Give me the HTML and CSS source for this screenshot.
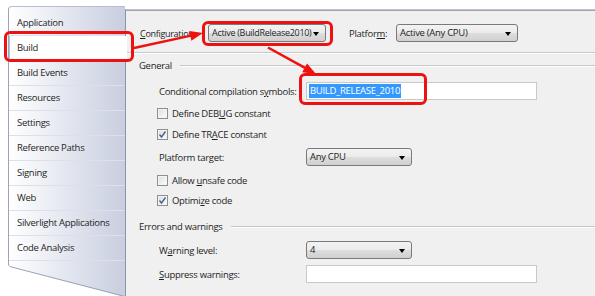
FILE: index.html
```html
<!DOCTYPE html>
<html lang="en">
<head>
    <meta charset="utf-8">
    <title>Project properties - Build</title>
    <link rel="stylesheet" href="styles.css">
</head>

<body>
    <div class="window">
        <nav class="sidebar">
            <div class="tabs">
                <div class="tab">Application</div>
                <div class="tab valgt">Build</div>
                <div class="tab">Build Events</div>
                <div class="tab">Resources</div>
                <div class="tab">Settings</div>
                <div class="tab">Reference Paths</div>
                <div class="tab">Signing</div>
                <div class="tab">Web</div>
                <div class="tab">Silverlight Applications</div>
                <div class="tab">Code Analysis</div>
            </div>
            <svg class="tabs-foot" width="117" height="34" viewBox="0 0 117 34">
                <defs>
                    <linearGradient id="foot" x1="0" x2="1" y1="0" y2="0">
                        <stop offset="0" stop-color="#ffffff"/>
                        <stop offset="1" stop-color="#c8cee0"/>
                    </linearGradient>
                </defs>
                <polygon points="0,0 117,0 117,34 2,4 0,2" fill="url(#foot)"/>
                <polyline points="0.5,0 0.5,2 2,3.6 117,33.5" fill="none" stroke="#9ba3b5" stroke-width="1"/>
            </svg>
        </nav>

        <main class="page">
            <div class="configbar">
                <span class="cfg-label"><u>C</u>onfiguration:</span>
                <div class="combo combo-config">Active (BuildRelease2010)</div>
                <span class="plat-label">Platfor<u>m</u>:</span>
                <div class="combo combo-platform">Active (Any CPU)</div>
            </div>

            <div class="group-head">General</div>

            <div class="row r-compile">
                <span class="label">Conditional compilation s<u>y</u>mbols:</span>
                <div class="textbox wide"><span class="selected">BUILD_RELEASE_2010</span></div>
            </div>
            <div class="row check r-debug">
                <span class="box"></span>
                <span>Define DEB<u>U</u>G constant</span>
            </div>
            <div class="row check r-trace">
                <span class="box"><svg width="9" height="9" viewBox="0 0 9 9"><polyline points="1.5,4.5 3.5,7 7.5,1.5" fill="none" stroke="#4a5f97" stroke-width="1.4"/></svg></span>
                <span>Define TR<u>A</u>CE constant</span>
            </div>
            <div class="row r-platform">
                <span class="label">Platform target:</span>
                <div class="combo combo-small">Any CPU</div>
            </div>
            <div class="row check r-allow">
                <span class="box"></span>
                <span>Allow <u>u</u>nsafe code</span>
            </div>
            <div class="row check r-optimize">
                <span class="box"><svg width="9" height="9" viewBox="0 0 9 9"><polyline points="1.5,4.5 3.5,7 7.5,1.5" fill="none" stroke="#4a5f97" stroke-width="1.4"/></svg></span>
                <span>Optimi<u>z</u>e code</span>
            </div>

            <div class="group-head h-errors">Errors and warnings</div>

            <div class="row r-warning">
                <span class="label">W<u>a</u>rning level:</span>
                <div class="combo combo-small">4</div>
            </div>
            <div class="row r-suppress">
                <span class="label"><u>S</u>uppress warnings:</span>
                <div class="textbox wide"></div>
            </div>
        </main>
    </div>

    <!-- red annotations drawn on top of the screenshot -->
    <div class="callout c-build"></div>
    <div class="callout c-config"></div>
    <div class="callout c-compile"></div>
    <svg class="arrows" width="595" height="296" viewBox="0 0 595 296">
        <line x1="134" y1="48" x2="191" y2="35.6" stroke="#ee1111" stroke-width="2.5"/>
        <polygon points="203,33 191.4,40.7 189.2,30.9" fill="#ee1111"/>
        <line x1="268" y1="47.5" x2="305" y2="67.8" stroke="#ee1111" stroke-width="2.5"/>
        <polygon points="316,74 302.2,72.2 307,63.4" fill="#ee1111"/>
    </svg>
</body>
</html>
```

FILE: styles.css
```css
* {
    box-sizing: border-box;
}

body {
    margin: 0;
    width: 595px;
    height: 296px;
    overflow: hidden;
    position: relative;
    background-color: #ffffff;
    font-family: "Open Sans", "Noto Sans", sans-serif;
    font-size: 9.5px;
    letter-spacing: -0.3px;
    color: #1e1e1e;
}

u {
    text-decoration-thickness: 1px;
    text-underline-offset: 1px;
}

.window {
    display: flex;
    height: 296px;
    padding-left: 8px;
}

/* left tab list */
.sidebar {
    width: 117px;
    flex: none;
    margin-top: 6px;
    position: relative;
    z-index: 1;
}

.tabs {
    border-left: 1px solid #9ba3b5;
    border-top: 1px solid #b7bfcf;
    border-top-left-radius: 4px;
    background: linear-gradient(to right, #ffffff, #c8cee0);
    padding: 4px 0 2px 0;
}

.tab {
    height: 25px;
    line-height: 24px;
    padding-left: 8px;
    border-bottom: 1px solid #dde0ea;
    white-space: nowrap;
}

.tab.valgt {
    background-color: #ffffff;
    margin-right: -2px;
    box-shadow: inset 1px 0 0 #a9c7e6;
}

.tabs-foot {
    display: block;
}

/* right property page */
.page {
    flex: 1;
    margin-top: 9px;
    border-top: 1px solid #bcc5d8;
    border-left: 1px solid #8d95a5;
    background-color: #f0f0f0;
    box-shadow: inset 0 1px 0 #a3a3a3;
    padding-left: 13px;
}

.configbar {
    display: flex;
    align-items: center;
    height: 43px;
    padding-top: 4px;
    margin-left: -13px;
    padding-left: 14px;
    border-bottom: 1px solid #c9c9c9;
    box-shadow: 0 1px 0 #ffffff;
}

.cfg-label {
    width: 68px;
    font-size: 9px;
}

.plat-label {
    width: 47px;
    margin-left: 23px;
}

.combo {
    position: relative;
    height: 18px;
    line-height: 16px;
    padding-left: 3px;
    border: 1px solid #7a7a7a;
    border-radius: 3px;
    background: linear-gradient(to bottom, #f3f3f3, #ebebeb 50%, #dedede 50%, #d0d0d0);
    white-space: nowrap;
    overflow: hidden;
}

.combo::after {
    content: "";
    position: absolute;
    right: 6px;
    top: 7px;
    border-top: 4px solid #000000;
    border-left: 3px solid transparent;
    border-right: 3px solid transparent;
}

.combo-config {
    width: 118px;
    font-size: 9px;
}

.combo-platform {
    width: 122px;
}

.combo-small {
    width: 106px;
}

.group-head {
    display: flex;
    align-items: center;
    height: 20px;
    margin-top: 2px;
}

.group-head::after {
    content: "";
    flex: 1;
    height: 1px;
    margin-left: 8px;
    background-color: #c6c6c6;
    box-shadow: 0 1px 0 #ffffff;
}

.row {
    display: flex;
    align-items: center;
    height: 20px;
    padding-left: 20px;
}

.label {
    width: 147px;
    flex: none;
    white-space: nowrap;
}

.textbox {
    height: 18px;
    background-color: #ffffff;
    border: 1px solid #c9c9c9;
    padding: 1px 2px;
}

.textbox.wide {
    width: 231px;
}

.selected {
    display: inline-block;
    height: 14px;
    line-height: 14px;
    padding: 0 1px;
    background-color: #3399ff;
    color: #ffffff;
}

.check {
    padding-left: 18px;
}

.box {
    width: 11px;
    height: 11px;
    margin-right: 4px;
    border: 1px solid #8f8f8f;
    background: linear-gradient(135deg, #dcdcdc, #ffffff);
    box-shadow: inset 0 0 0 1px #f4f4f4;
    display: flex;
    align-items: center;
    justify-content: center;
}

.r-compile { margin-top: 6px; }
.r-debug { margin-top: 2px; }
.r-trace { margin-top: 1px; }
.r-platform { margin-top: 3px; }
.r-allow { margin-top: 3px; }
.r-optimize { margin-top: 0; }
.h-errors { margin-top: 6px; }
.r-warning { margin-top: 4px; }
.r-suppress { margin-top: 4px; }

/* red marks over the screenshot */
.callout {
    position: absolute;
    border: 3px solid #ee1111;
    border-radius: 6px;
    z-index: 2;
}

.c-build {
    left: 4px;
    top: 31px;
    width: 130px;
    height: 31px;
}

.c-config {
    left: 202px;
    top: 21px;
    width: 131px;
    height: 25px;
}

.c-compile {
    left: 299px;
    top: 73px;
    width: 128px;
    height: 32px;
}

.arrows {
    position: absolute;
    left: 0;
    top: 0;
    z-index: 3;
}
```
